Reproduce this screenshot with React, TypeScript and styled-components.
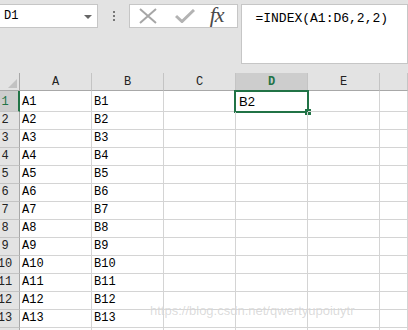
import React from 'react';
import styled, { createGlobalStyle } from 'styled-components';

const Global = createGlobalStyle`
  html, body { margin: 0; padding: 0; background: #fff; overflow: hidden; }
  #root { width: 408px; height: 330px; overflow: hidden; position: relative; }
`;

const GREEN = '#217346';
const BG = '#e3e3e3';

const Toolbar = styled.div`
  display: flex;
  align-items: flex-start;
  height: 73px;
  box-sizing: border-box;
  padding-top: 4px;
  background: ${BG};
`;

const NameBox = styled.div`
  margin-left: -1px;
  width: 99px;
  height: 24px;
  box-sizing: border-box;
  background: #fff;
  border: 1px solid #c6c6c6;
  display: flex;
  align-items: center;
  justify-content: space-between;
  padding: 0 5px 0 4px;
  font: 12px 'Liberation Mono', monospace;
  color: #000;
`;

const Caret = styled.span`
  width: 0;
  height: 0;
  border-left: 4px solid transparent;
  border-right: 4px solid transparent;
  border-top: 4px solid #666;
  margin-top: 1px;
`;

const Grip = styled.div`
  width: 31px;
  height: 24px;
  display: flex;
  flex-direction: column;
  align-items: center;
  justify-content: center;
  gap: 2px;
  padding-left: 1px;
  box-sizing: border-box;
`;

const Dot = styled.span`
  width: 2px;
  height: 2px;
  background: #777;
`;

const IconBox = styled.div`
  width: 110px;
  height: 24px;
  box-sizing: border-box;
  background: #fff;
  border: 1px solid #c6c6c6;
  display: flex;
  align-items: center;
  padding-left: 9px;
`;

const IconSlot = styled.span<{ $w: number }>`
  width: ${(p) => p.$w}px;
  display: flex;
  align-items: center;
`;

const Fx = styled.span`
  font: italic 22px 'Liberation Serif', serif;
  color: #4a4a4a;
  letter-spacing: -1px;
  line-height: 22px;
  margin-top: -3px;
`;

const FormulaBox = styled.div`
  margin-left: 3px;
  width: 167px;
  height: 60px;
  box-sizing: border-box;
  background: #fff;
  border: 1px solid #c6c6c6;
  padding: 6px 0 0 13px;
  font: 13px/15px 'Liberation Mono', monospace;
  color: #000;
`;

const Sheet = styled.div`
  display: grid;
  grid-template-columns: 20px repeat(5, 72px) 1fr;
  grid-template-rows: 18px 21px repeat(13, 18px);
`;

const Corner = styled.div`
  background: ${BG};
  border-right: 1px solid #a8a8a8;
  border-bottom: 1px solid #a8a8a8;
  box-sizing: border-box;
  display: flex;
  align-items: flex-end;
  justify-content: flex-end;
  padding: 0 2px 2px 0;
`;

const Tri = styled.span`
  width: 0;
  height: 0;
  border-left: 9px solid transparent;
  border-bottom: 9px solid #c2c2c2;
`;

const ColHead = styled.div<{ $active?: boolean }>`
  background: ${(p) => (p.$active ? '#cdcdcd' : BG)};
  border-right: 1px solid #c4c4c4;
  border-bottom: 1px solid ${(p) => (p.$active ? GREEN : '#a8a8a8')};
  box-sizing: border-box;
  display: flex;
  align-items: flex-end;
  justify-content: center;
  padding-bottom: 1px;
  font: ${(p) => (p.$active ? 'bold ' : '')}12px/14px 'Liberation Mono', monospace;
  color: ${(p) => (p.$active ? GREEN : '#222')};
`;

const RowHead = styled.div<{ $active?: boolean }>`
  background: ${(p) => (p.$active ? '#cdcdcd' : BG)};
  border-right: ${(p) => (p.$active ? `2px solid ${GREEN}` : '1px solid #a8a8a8')};
  border-bottom: 1px solid #c4c4c4;
  box-sizing: border-box;
  display: flex;
  align-items: flex-end;
  padding-bottom: 2px;
  font: 12px/14px 'Liberation Mono', monospace;
  color: ${(p) => (p.$active ? GREEN : '#222')};
`;

const RowNum = styled.span`
  width: 10px;
  display: flex;
  justify-content: center;
  white-space: nowrap;
`;

const Cell = styled.div`
  position: relative;
  border-right: 1px solid #d4d4d4;
  border-bottom: 1px solid #d4d4d4;
  box-sizing: border-box;
  display: flex;
  align-items: flex-end;
  padding: 0 0 2px 2px;
  font: 12px/14px 'Liberation Mono', monospace;
  color: #000;
  white-space: nowrap;
`;

const ActiveText = styled.span`
  font: 13px/15px 'Liberation Sans', Arial, sans-serif;
  padding-left: 1px;
`;

const Selection = styled.div`
  position: absolute;
  left: -2px;
  top: -1px;
  width: 75px;
  height: 23px;
  box-sizing: border-box;
  border: 2px solid ${GREEN};
  pointer-events: none;
`;

const Handle = styled.div`
  position: absolute;
  left: 69px;
  top: 18px;
  width: 6px;
  height: 6px;
  background: ${GREEN};
`;

const Watermark = styled.div`
  position: absolute;
  left: 150px;
  top: 303px;
  font: 13px 'Liberation Sans', Arial, sans-serif;
  color: rgba(175, 175, 175, 0.45);
  text-shadow: 0 0 1px rgba(255, 255, 255, 0.8);
  white-space: nowrap;
  pointer-events: none;
`;

const cols = ['A', 'B', 'C', 'D', 'E', ''];
const rowCount = 14;

export default function App() {
  return (
    <>
      <Global />
      <Toolbar>
        <NameBox>
          <span>D1</span>
          <Caret />
        </NameBox>
        <Grip>
          <Dot />
          <Dot />
          <Dot />
        </Grip>
        <IconBox>
          <IconSlot $w={36}>
            <svg width="18" height="16" viewBox="0 0 18 16">
              <path d="M1 1 L17 15 M17 1 L1 15" stroke="#a6a6a6" strokeWidth="2" fill="none" />
            </svg>
          </IconSlot>
          <IconSlot $w={35}>
            <svg width="20" height="14" viewBox="0 0 20 14">
              <path d="M1 7 L7 12.5 L19 1" stroke="#b3b3b3" strokeWidth="3" fill="none" />
            </svg>
          </IconSlot>
          <Fx>fx</Fx>
        </IconBox>
        <FormulaBox>=INDEX(A1:D6,2,2)</FormulaBox>
      </Toolbar>
      <Sheet>
        <Corner>
          <Tri />
        </Corner>
        {cols.map((c, i) => (
          <ColHead key={i} $active={c === 'D'}>
            {c}
          </ColHead>
        ))}
        {Array.from({ length: rowCount }, (_, r) => {
          const n = r + 1;
          return (
            <React.Fragment key={n}>
              <RowHead $active={n === 1}>
                <RowNum>{n}</RowNum>
              </RowHead>
              <Cell>{`A${n}`}</Cell>
              <Cell>{`B${n}`}</Cell>
              <Cell />
              <Cell>
                {n === 1 && (
                  <>
                    <ActiveText>B2</ActiveText>
                    <Selection />
                    <Handle />
                  </>
                )}
              </Cell>
              <Cell />
              <Cell />
            </React.Fragment>
          );
        })}
      </Sheet>
      <Watermark>https://blog.csdn.net/qwertyupoiuytr</Watermark>
    </>
  );
}
